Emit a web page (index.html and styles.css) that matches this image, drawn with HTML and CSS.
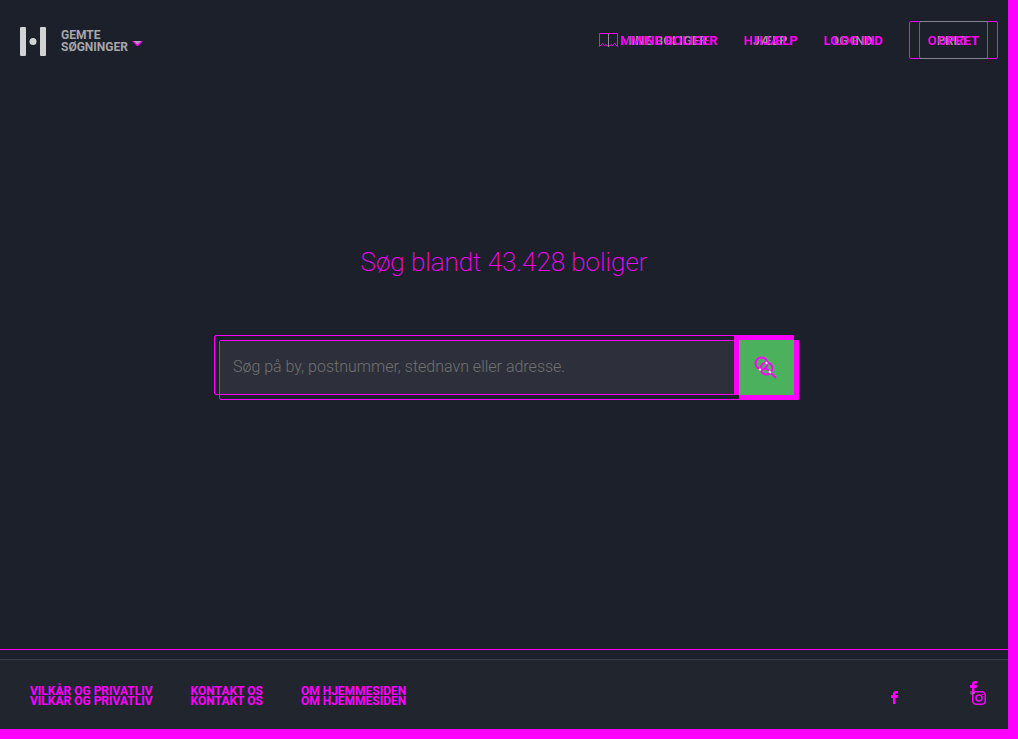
FILE: index.html
```
<!DOCTYPE html>
<html lang="da">
<head>
<meta charset="utf-8">
<meta name="viewport" content="width=device-width, initial-scale=1">
<title>Søg blandt 43.428 boliger</title>
<link rel="stylesheet" href="styles.css">
</head>
<body>
<div class="page">
  <header class="header">
    <a class="logo" href="#" aria-label="Forside">
      <svg width="26" height="29" viewBox="0 0 26 29" fill="currentColor"><rect width="6" height="29" y="0" rx="1"/><rect x="20" width="6" height="29" rx="1"/><circle cx="13" cy="14.5" r="3.5"/></svg>
    </a>
    <button class="saved" type="button"><span>GEMTE<br>SØGNINGER</span>
      <svg class="caret" width="11" height="6" viewBox="0 0 11 6"><path d="M0 0h11L5.500 5.500z" fill="#f0f"/><path d="M2 0h7L6 3H5z" fill="#a9a2ac"/></svg>
    </button>
    <nav class="nav">
      <a class="nav-link" href="#">
        <svg class="bookmark" width="20" height="15" viewBox="0 0 20 15" fill="none" stroke="#f0f"><path d="M.5 13.500V.5h18v13l-3-3-2 2-1-1-3 2-3-2-1 1-2-2z"/><path d="M9.500 1v13" stroke="#929397"/></svg>
        <span class="ghost-x" data-text="MINE BOLIGER">MINE BOLIGER</span>
      </a>
      <a class="nav-link" href="#"><span class="ghost-x" data-text="HJÆLP">HJÆLP</span></a>
      <a class="nav-link" href="#"><span class="ghost-x" data-text="LOG IND">LOG IND</span></a>
      <button class="signup" type="button"><span class="ghost-x" data-text="OPRET">OPRET</span></button>
    </nav>
  </header>
  <main class="main">
    <h1 class="title">Søg blandt 43.428 boliger</h1>
    <form class="search">
      <input class="search-input" type="text" aria-label="Søg" placeholder="Søg på by, postnummer, stednavn eller adresse.">
      <button class="search-button" type="button" aria-label="Søg">
        <svg width="24" height="24" viewBox="0 0 24 24" fill="none" stroke="#f0f" stroke-width="2"><circle cx="7.500" cy="7.500" r="6"/><circle cx="12.500" cy="12.500" r="6"/><path d="M11 11l11 11"/><path d="M12 6l1 2M5 13l2 1M15 15l2 2" stroke="#d9f3df"/></svg>
      </button>
    </form>
  </main>
  <footer class="footer">
    <nav class="footer-links">
      <a class="ghost-y" href="#" data-text="VILKÅR OG PRIVATLIV">VILKÅR OG PRIVATLIV</a>
      <a class="ghost-y" href="#" data-text="KONTAKT OS">KONTAKT OS</a>
      <a class="ghost-y" href="#" data-text="OM HJEMMESIDEN">OM HJEMMESIDEN</a>
    </nav>
    <div class="social">
      <a href="#" aria-label="Facebook"><svg width="7" height="13" viewBox="0 0 7 13" fill="#f0f"><path d="M2 13V7H0V4h2V3q0-3 3-3h2v2.500H5.500q-1 0-1 1V4H7l-.4 3H4.500v6z"/></svg></a>
      <a class="social-pair" href="#" aria-label="Instagram"><svg width="18" height="25" viewBox="0 0 18 25" fill="none" stroke="#f0f" stroke-width="1.500"><path d="M2 13V7H0V4h2V3q0-3 3-3h2v2.500H5.500q-1 0-1 1V4H7l-.4 3H4.500v6z" fill="#f0f" stroke="none"/><rect x="2.750" y="10.750" width="12.500" height="12.500" rx="3.500"/><circle cx="9" cy="17" r="3"/><path d="M12 13.500h1.500" stroke-width="1"/><path d="M1 10v3h2M3 12h2" stroke="#8b858f" stroke-width="1"/></svg></a>
    </div>
  </footer>
</div>
</body>
</html>
```
FILE: styles.css
```
* { box-sizing: border-box; }
body {
  margin: 0;
  background: #1c202a;
  color: #f0f;
  font-family: Roboto, "Liberation Sans", sans-serif;
}
a { color: inherit; text-decoration: none; }
button { font: inherit; color: inherit; padding: 0; background: none; border: 0; cursor: pointer; }
svg { display: block; }
.page {
  min-height: 100vh;
  display: flex;
  flex-direction: column;
  border: solid #f0f;
  border-width: 0 10px 10px 0;
}
.header {
  display: flex;
  align-items: center;
  padding: 21px 20px;
}
.logo { color: #d0d2d4; margin-right: 15px; padding-top: 3px; }
.saved {
  display: flex;
  align-items: center;
  gap: 4px;
  padding-top: 2px;
  color: #a6a7a9;
  font-size: 12px;
  font-weight: 700;
  line-height: 12px;
  text-align: left;
}
.caret { margin-top: 5px; }
.nav {
  margin-left: auto;
  display: flex;
  align-items: center;
  gap: 36px;
  font-size: 13px;
  font-weight: 700;
  line-height: 16px;
}
.nav-link { display: flex; align-items: center; gap: 1px; }
.ghost-x, .ghost-y { position: relative; white-space: nowrap; }
.ghost-x {
  padding-top: 2px;
  color: transparent;
  background: linear-gradient(90deg, #f0f 10px, #939499 10px) text;
}
.ghost-x::after, .ghost-y::after {
  content: attr(data-text);
  position: absolute;
  top: 2px;
  left: 10px;
  color: #f0f;
}
.ghost-y::after { top: 10px; left: 0; }
.signup {
  position: relative;
  height: 38px;
  padding: 2px 18px 0;
  border: 1px solid #f0f;
  border-radius: 2px;
}
.signup::before {
  content: "";
  position: absolute;
  inset: -1px -11px -1px 9px;
  border: 1px solid #f0f;
  border-radius: 2px;
}
.signup::after {
  content: "";
  position: absolute;
  inset: -1px 0 -1px 10px;
  border: solid #85868c;
  border-width: 1px 0;
}
.main {
  flex: 1;
  display: flex;
  flex-direction: column;
  align-items: center;
  justify-content: center;
  gap: 57px;
  padding: 0 20px 88px;
}
.title { margin: 0; font-size: 26px; font-weight: 200; line-height: 32px; }
.search {
  position: relative;
  display: flex;
  width: 100%;
  max-width: 580px;
  height: 60px;
  border: 1px solid #f0f;
  border-radius: 2px;
}
.search::before {
  content: "";
  position: absolute;
  inset: 4px -6px -6px 4px;
  border: 1px solid #f0f;
  border-radius: 2px;
}
.search::after {
  content: "";
  position: absolute;
  inset: 5px 59px 0 5px;
  background: #2d303a;
}
.search-input {
  position: relative;
  z-index: 1;
  flex: 1;
  min-width: 0;
  border: 0;
  padding: 2px 18px 0;
  background: none;
  color: #aaa;
  font: 300 16px Roboto, "Liberation Sans", sans-serif;
  outline: 0;
}
.search-input::placeholder { color: #707070; opacity: 1; }
.search-button {
  position: relative;
  z-index: 1;
  width: 60px;
  height: 60px;
  margin: -1px;
  padding: 15px;
  background: #4bb15c;
  border: solid #f0f;
  border-width: 5px 0 0 5px;
  box-shadow: 5px 5px 0 #f0f;
  border-radius: 1px;
}
.footer {
  display: flex;
  justify-content: space-between;
  height: 80px;
  padding: 31px 20px 0 30px;
  border-top: 1px solid #f0f;
  background: linear-gradient(#1c202a 9px, #3b3e46 9px, #3b3e46 10px, #21252e 10px);
}
.footer-links {
  display: flex;
  gap: 38px;
  font-size: 12px;
  font-weight: 700;
  line-height: 20px;
}
.social { display: flex; align-items: flex-start; gap: 72px; }
.social > a:first-child { margin-top: 10px; }
```
